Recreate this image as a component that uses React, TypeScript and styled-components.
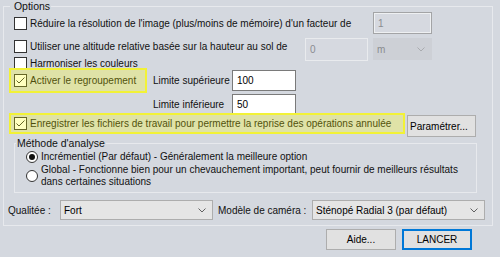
import React from "react";
import styled, { createGlobalStyle } from "styled-components";

const GlobalStyle = createGlobalStyle`
  html, body {
    margin: 0;
    padding: 0;
    background: #d4d8df;
  }
  body {
    font-family: "Liberation Sans", Arial, sans-serif;
    font-size: 10px;
    color: #111;
  }
`;

const Dialog = styled.div`
  width: 500px;
  height: 257px;
  box-sizing: border-box;
  padding-top: 1px;
  overflow: hidden;
  white-space: nowrap;
`;

const GroupBox = styled.fieldset<{ $margin: string; $padding: string }>`
  margin: ${(p) => p.$margin};
  padding: ${(p) => p.$padding};
  border: 1px solid #e7e9ed;
  min-width: 0;
`;

const Legend = styled.legend`
  padding: 0 1px;
  line-height: 11px;
  font-size: 10.5px;
`;

const TopGrid = styled.div`
  display: grid;
  grid-template-columns: 1fr 63px 59px;
  grid-template-rows: 22px 22px;
  column-gap: 5px;
  row-gap: 4px;
  margin: 0 53px 0 4px;
`;

const Check = styled.label<{ $span?: boolean; $top?: number }>`
  display: flex;
  align-items: center;
  gap: 3px;
  height: 13px;
  align-self: ${(p) => (p.$top !== undefined ? "start" : "center")};
  margin-top: ${(p) => p.$top ?? 0}px;
  grid-column: ${(p) => (p.$span ? "1 / 3" : "auto")};
`;

const Box = styled.span`
  width: 13px;
  height: 13px;
  box-sizing: border-box;
  border: 1px solid #333;
  background: #fff;
  flex: none;
  display: flex;
  align-items: center;
  justify-content: center;
`;

const Field = styled.div<{ $disabled?: boolean; $sunken?: boolean; $h: number }>`
  box-sizing: border-box;
  height: ${(p) => p.$h}px;
  align-self: center;
  display: flex;
  align-items: center;
  padding-left: 4px;
  background: ${(p) => (p.$disabled ? "#d6d9e0" : "#fff")};
  color: ${(p) => (p.$disabled ? "#8a8c90" : "#000")};
  border: 1px solid
    ${(p) => (p.$disabled ? (p.$sunken ? "#a3a4a6" : "#e9ebee") : "#7a7a7a")};
  box-shadow: ${(p) => (p.$sunken ? "inset 0 0 0 1px #eef0f2" : "none")};
`;

const Select = styled.div<{ $disabled?: boolean }>`
  box-sizing: border-box;
  height: ${(p) => (p.$disabled ? 22 : 20)}px;
  align-self: center;
  display: flex;
  align-items: center;
  justify-content: space-between;
  padding: 0 6px 0 3px;
  background: ${(p) => (p.$disabled ? "#cdd0d6" : "#e5e5e5")};
  color: ${(p) => (p.$disabled ? "#8a8c90" : "#000")};
  border: 1px solid ${(p) => (p.$disabled ? "#cdd0d6" : "#adadad")};
`;

const Row = styled.div<{ $top: number; $h: number; $left: number }>`
  display: flex;
  align-items: flex-start;
  height: ${(p) => p.$h}px;
  margin-top: ${(p) => p.$top}px;
  margin-left: ${(p) => p.$left}px;
`;

const ClusterGrid = styled.div`
  display: grid;
  grid-template-columns: 138px 85px 64px;
  grid-template-rows: 25px 20px;
  column-gap: 0;
  row-gap: 1px;
  margin: -2px 0 0 -1px;
  position: relative;
`;

const Highlight = styled.div<{ $w: number; $h: number }>`
  position: relative;
  box-sizing: border-box;
  width: ${(p) => p.$w}px;
  height: ${(p) => p.$h}px;
  border: 2px solid #f2f236;
  display: flex;
  align-items: center;
  padding-left: 3px;

  &::after {
    content: "";
    position: absolute;
    inset: 0;
    background: rgba(255, 255, 0, 0.25);
    pointer-events: none;
  }
`;

const SideLabel = styled.span`
  align-self: center;
  padding-left: 6px;
`;

const Button = styled.button<{ $primary?: boolean; $w: number; $h: number }>`
  box-sizing: border-box;
  width: ${(p) => p.$w}px;
  height: ${(p) => p.$h}px;
  font: inherit;
  color: #000;
  background: #e1e1e1;
  border: 1px solid ${(p) => (p.$primary ? "#0078d7" : "#adadad")};
  box-shadow: ${(p) => (p.$primary ? "inset 0 0 0 1px #0078d7" : "none")};
  padding: 0 2px;
`;

const RadioRow = styled.label<{ $top: number; $h: number }>`
  display: flex;
  align-items: center;
  gap: 3px;
  height: ${(p) => p.$h}px;
  margin-top: ${(p) => p.$top}px;
  padding-left: 10px;
  line-height: 12px;
`;

const Radio = styled.span<{ $on?: boolean }>`
  width: 12px;
  height: 12px;
  box-sizing: border-box;
  border-radius: 50%;
  border: 1px solid #333;
  background: #fff;
  flex: none;
  display: flex;
  align-items: center;
  justify-content: center;

  &::before {
    content: "";
    width: 6px;
    height: 6px;
    border-radius: 50%;
    background: ${(p) => (p.$on ? "#111" : "transparent")};
  }
`;

const BottomGrid = styled.div`
  display: grid;
  grid-template-columns: 52px 153px 5px 94px 173px;
  align-items: center;
  height: 20px;
  margin: 7px 0 0 -2px;
`;

const Footer = styled.div`
  display: flex;
  justify-content: flex-end;
  gap: 6px;
  margin-top: 3px;
  padding-right: 28px;
`;

const Chevron = ({ light }: { light?: boolean }) => (
  <svg width="8" height="5" viewBox="0 0 8 5">
    <path
      d="M0.5 0.5 L4 4 L7.5 0.5"
      fill="none"
      stroke={light ? "#a9abaf" : "#606060"}
      strokeWidth="1"
    />
  </svg>
);

const CheckBox = ({ checked }: { checked?: boolean }) => (
  <Box>
    {checked && (
      <svg width="11" height="11" viewBox="0 0 11 11">
        <path d="M1.5 5.5 L4 8 L9.5 2.5" fill="none" stroke="#333" strokeWidth="1" />
      </svg>
    )}
  </Box>
);

export default function App() {
  return (
    <Dialog>
      <GlobalStyle />
      <GroupBox $margin="0 7px 0 3px" $padding="0 7px 5px 6px">
        <Legend>&nbsp;Options</Legend>
        <TopGrid>
          <Check $span>
            <CheckBox />
            Réduire la résolution de l'image (plus/moins de mémoire) d'un facteur de
          </Check>
          <Field $disabled $sunken $h={22}>1</Field>
          <Check $top={2}>
            <CheckBox />
            Utiliser une altitude relative basée sur la hauteur au sol de
          </Check>
          <Field $disabled $h={23}>0</Field>
          <Select $disabled>
            m
            <Chevron light />
          </Select>
        </TopGrid>
        <Row $top={-3} $h={13} $left={4}>
          <Check>
            <CheckBox />
            Harmoniser les couleurs
          </Check>
        </Row>
        <ClusterGrid>
          <Highlight $w={138} $h={25}>
            <Check>
              <CheckBox checked />
              Activer le regroupement
            </Check>
          </Highlight>
          <SideLabel>Limite supérieure</SideLabel>
          <Field $h={21}>100</Field>
          <span />
          <SideLabel>Limite inférieure</SideLabel>
          <Field $h={20}>50</Field>
        </ClusterGrid>
        <Row $top={-1} $h={24} $left={-1}>
          <Highlight $w={396} $h={21}>
            <Check>
              <CheckBox checked />
              Enregistrer les fichiers de travail pour permettre la reprise des opérations annulée
            </Check>
          </Highlight>
          <Button $w={69} $h={22} style={{ marginLeft: 2, marginTop: 2, textAlign: "left" }}>
            Paramétrer...
          </Button>
        </Row>
        <GroupBox $margin="1px 8px 0 4px" $padding="0 0 4px 1px">
          <Legend>Méthode d'analyse</Legend>
          <RadioRow $top={2} $h={12}>
            <Radio $on />
            Incrémentiel (Par défaut) - Généralement la meilleure option
          </RadioRow>
          <RadioRow $top={1} $h={24}>
            <Radio />
            <span>
              Global - Fonctionne bien pour un chevauchement important, peut fournir de meilleurs résultats
              <br />
              dans certaines situations
            </span>
          </RadioRow>
        </GroupBox>
        <BottomGrid>
          <span>Qualitée :</span>
          <Select>
            Fort
            <Chevron />
          </Select>
          <span />
          <span>Modèle de caméra :</span>
          <Select>
            Sténopé Radial 3 (par défaut)
            <Chevron />
          </Select>
        </BottomGrid>
      </GroupBox>
      <Footer>
        <Button $w={70} $h={21}>Aide...</Button>
        <Button $primary $w={70} $h={21}>LANCER</Button>
      </Footer>
    </Dialog>
  );
}
